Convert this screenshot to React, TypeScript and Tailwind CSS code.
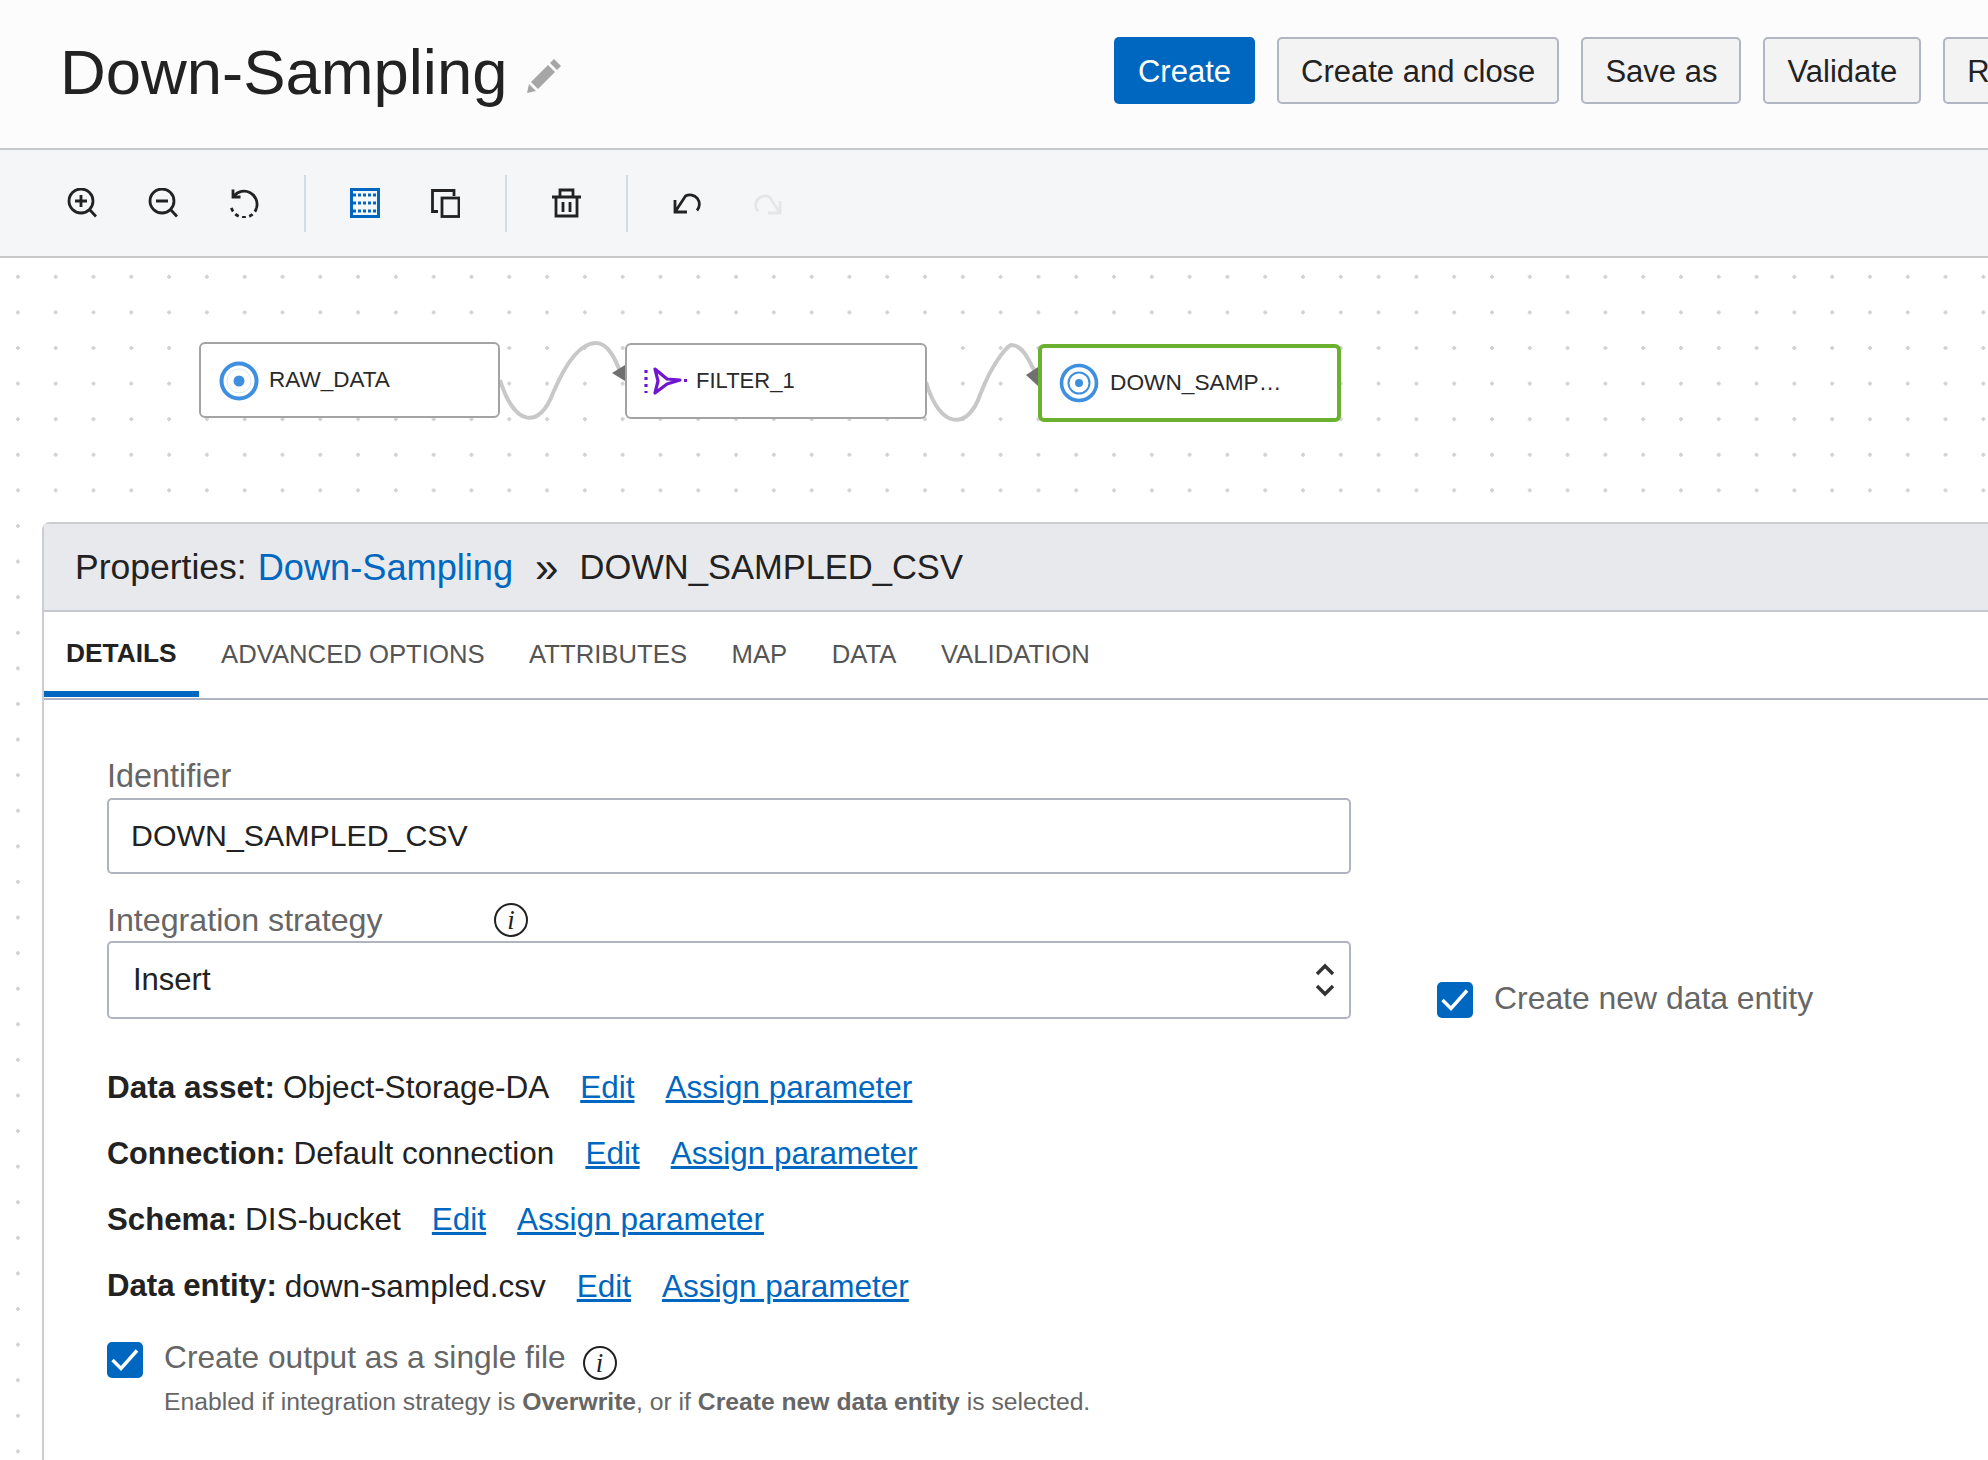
const Sep = () => <div className="mx-[-1px] h-[57px] w-[2px] bg-[#d3dce4]" />;

const ToolIcon = ({ children, className = "" }: { children: React.ReactNode; className?: string }) => (
  <svg
    viewBox="0 0 30 30"
    fill="none"
    stroke="currentColor"
    strokeWidth="2.8"
    className={`h-[30px] w-[30px] text-[#222222] ${className}`}
  >
    {children}
  </svg>
);

const Info = ({ className = "" }: { className?: string }) => (
  <span
    className={`flex h-[34px] w-[34px] shrink-0 items-center justify-center rounded-full border-2 border-[#222222] font-['Liberation_Serif',serif] text-[27px] italic leading-none text-[#222222] ${className}`}
  >
    i
  </span>
);

const Check = () => (
  <span className="flex h-[36px] w-[36px] shrink-0 items-center justify-center rounded-[5px] bg-[#0067c0]">
    <svg viewBox="0 0 36 36" fill="none" stroke="white" strokeWidth="3.4" className="h-[36px] w-[36px]">
      <path d="M5.5 18 L14 26.5 L30 8.5" />
    </svg>
  </span>
);

const HeaderButton = ({ label, className = "" }: { label: string; className?: string }) => (
  <button className={`h-[67px] shrink-0 rounded-[5px] border-2 border-[#b2b5c2] bg-[#f3f3f3] px-[22px] pt-[4px] text-left text-[31px] text-[#222222] ${className}`}>
    {label}
  </button>
);

const Node = ({ className, children, label }: { className: string; children: React.ReactNode; label: string }) => (
  <div className={`absolute flex items-center rounded-[6px] bg-white text-[#2a2a2a] ${className}`}>
    {children}
    <span className="mb-[2px]">{label}</span>
  </div>
);

const tabs = ["ADVANCED OPTIONS", "ATTRIBUTES", "MAP", "DATA", "VALIDATION"];

const rows = [
  { name: "Data asset:", value: "Object-Storage-DA", nameSize: "text-[31.5px]" },
  { name: "Connection:", value: "Default connection", nameSize: "text-[30.6px]" },
  { name: "Schema:", value: "DIS-bucket", nameSize: "text-[31.2px]" },
  { name: "Data entity:", value: "down-sampled.csv", nameSize: "text-[31.2px]" },
];

export default function App() {
  return (
    <div className="flex h-[1460px] w-[1988px] flex-col overflow-hidden bg-white font-['Liberation_Sans',sans-serif] text-[#222222]">
      {/* page header */}
      <div className="flex h-[150px] shrink-0 items-start border-b-2 border-[#c6c8ca] bg-[#fcfcfc]">
        <div className="ml-[60px] mt-[34px] flex w-[1054px] shrink-0 items-center">
          <h1 className="whitespace-nowrap text-[63.4px] leading-[76px] text-[#222222]">Down-Sampling</h1>
          <svg viewBox="0 0 36 36" fill="#a6a6a6" className="ml-[19px] mt-[8px] h-[36px] w-[36px]">
            <path d="M1 35 L3 26 L10 33 Z" />
            <path d="M5 24 L22 7 L29 14 L12 31 Z" />
            <path d="M24 5 L28 1 L35 8 L31 12 Z" />
          </svg>
        </div>
        <div className="mt-[37px] flex gap-[22px]">
          <button className="h-[67px] w-[141px] shrink-0 rounded-[5px] bg-[#0067c0] pt-[4px] text-[31px] text-white">Create</button>
          <HeaderButton label="Create and close" />
          <HeaderButton label="Save as" />
          <HeaderButton label="Validate" />
          <HeaderButton label="R" className="w-[140px]" />
        </div>
      </div>

      {/* toolbar */}
      <div className="flex h-[108px] shrink-0 items-center border-b-2 border-[#c6c8ca] bg-[#f5f6f8]">
        <div className="ml-[67px] flex items-center gap-[51px]">
          <ToolIcon>
            <circle cx="14" cy="13" r="12" />
            <path d="M22.5 21.5 L29 28.5 M8 13 H20 M14 7 V19" />
          </ToolIcon>
          <ToolIcon>
            <circle cx="14" cy="13" r="12" />
            <path d="M22.5 21.5 L29 28.5 M8 13 H20" />
          </ToolIcon>
          <ToolIcon>
            <path d="M5 8 A13 13 0 0 1 27.5 20" />
            <path d="M27.5 20 A13 13 0 0 1 2 17" strokeDasharray="4 3.4" />
            <path d="M4 1.5 V9 H11.5" />
          </ToolIcon>
        </div>
        <div className="ml-[46px]"><Sep /></div>
        <div className="ml-[45px] flex items-center gap-[50px]">
          <svg viewBox="0 0 30 30" className="h-[30px] w-[30px]">
            <rect x="0" y="0" width="30" height="30" fill="#0067c0" />
            <rect x="3" y="3" width="24" height="24" fill="#f5f6f8" />
            <path d="M3 7 H27 M3 15 H27 M3 23 H27" stroke="#0067c0" strokeWidth="3" strokeDasharray="3 2" />
          </svg>
          <ToolIcon>
            <path d="M8 23.5 H2.5 V2.5 H24 V8" />
            <rect x="12" y="10" width="17" height="18.5" />
          </ToolIcon>
        </div>
        <div className="ml-[46px]"><Sep /></div>
        <div className="ml-[46px]">
          <ToolIcon>
            <path d="M0 9 H29 M8 9 V2 H21 V9 M4 9 V28 H25 V9 M11 14 V24 M18 14 V24" />
          </ToolIcon>
        </div>
        <div className="ml-[45px]"><Sep /></div>
        <div className="ml-[46px] flex items-center gap-[49px]">
          <ToolIcon>
            <path d="M2 12 V24 H14 M2 24 L12.5 8 A9.4 9.4 0 0 1 24 22.5" />
          </ToolIcon>
          <ToolIcon className="mt-[2px] text-[#e4e6e8]">
            <path d="M28 12 V24 H16 M28 24 L17.5 8 A9.4 9.4 0 0 0 6 22.5" />
          </ToolIcon>
        </div>
      </div>

      {/* canvas */}
      <div className="relative flex-1 overflow-hidden bg-white bg-[radial-gradient(circle,#d2d2d2_1.6px,transparent_1.7px)] bg-[size:37.8px_35.6px] bg-[position:-1px_1px]">
        <svg className="absolute left-0 top-0 h-[240px] w-[1400px]" fill="none" viewBox="0 0 1400 240">
          <path d="M500 122 C515 170 540 170 553 135 C570 95 585 85 596 85 C608 85 615 100 622 118" stroke="#c8c8c8" strokeWidth="4" />
          <path d="M612 115 L625 107 L625 123 Z" fill="#707070" />
          <path d="M926 124 C940 172 968 172 980 137 C995 98 1010 87 1011 87 C1022 87 1028 100 1034 112" stroke="#c8c8c8" strokeWidth="4" />
          <path d="M1026 117 L1038 109 L1038 128 Z" fill="#707070" />
        </svg>

        <Node label="RAW_DATA" className="left-[199px] top-[84px] h-[76px] w-[301px] border-2 border-[#a3a3a3] pt-[1px] text-[22.5px]">
          <svg viewBox="0 0 40 40" className="ml-[18px] mr-[10px] h-[40px] w-[40px]">
            <circle cx="20" cy="20" r="17.5" fill="white" stroke="#3f8fe0" strokeWidth="4" />
            <circle cx="20" cy="20" r="12" fill="none" stroke="#d8e8f8" strokeWidth="1" />
            <circle cx="20" cy="20" r="5.5" fill="#3f8fe0" />
          </svg>
        </Node>
        <Node label="FILTER_1" className="left-[625px] top-[85px] h-[76px] w-[302px] border-2 border-[#a3a3a3] text-[22px]">
          <svg viewBox="0 0 46 28" fill="none" stroke="#6f16d0" strokeWidth="3.2" className="ml-[16px] mr-[7px] h-[28px] w-[46px]">
            <path d="M12 2 L24 12 L37 13 L24 17 L12 26 L15 14 Z" strokeLinejoin="round" />
            <path d="M3 3 V26 M41 13.5 H46" strokeDasharray="3 4" />
          </svg>
        </Node>
        <Node label="DOWN_SAMP…" className="left-[1038px] top-[86px] h-[78px] w-[303px] border-[4px] border-[#6bb02e] text-[22.7px]">
          <svg viewBox="0 0 40 40" className="ml-[17px] mr-[11px] h-[40px] w-[40px]">
            <circle cx="20" cy="20" r="17.5" fill="white" stroke="#3f8fe0" strokeWidth="3.6" />
            <circle cx="20" cy="20" r="10.5" fill="none" stroke="#3f8fe0" strokeWidth="2" />
            <circle cx="20" cy="20" r="4" fill="#3f8fe0" />
          </svg>
        </Node>

        {/* properties panel */}
        <div className="relative ml-[42px] mt-[264px] h-[960px] rounded-tl-[8px] border-l-2 border-t-2 border-[#cccdd0] bg-white">
          <div className="flex h-[88px] items-center whitespace-nowrap border-b-2 border-[#c5c8ce] bg-[#e8e9ec] pl-[31px] pt-[2px]">
            <span className="text-[35.5px]">Properties:</span>
            <span className="ml-[11px] text-[36.2px] text-[#0067c0]">Down-Sampling</span>
            <span className="ml-[22px] text-[42px] leading-none">»</span>
            <span className="ml-[21px] text-[34.5px]">DOWN_SAMPLED_CSV</span>
          </div>

          <div className="flex h-[88px] items-center border-b-2 border-[#b0b4c0] pb-[2px] text-[25.7px] text-[#555555]">
            <div className="relative flex h-[86px] w-[155px] items-center pl-[22px] text-[26.3px] font-bold text-[#222222]">
              DETAILS
              <div className="absolute bottom-0 left-0 h-[6px] w-[155px] bg-[#0067c0]" />
            </div>
            <div className="ml-[22px] flex gap-[44.5px]">
              {tabs.map((t) => (
                <span key={t}>{t}</span>
              ))}
            </div>
          </div>

          <div className="flex pl-[63px] pt-[56px] text-[31.5px]">
            <div className="w-[1244px] shrink-0">
              <div className="h-[40px] text-[32.4px] leading-[40px] text-[#666666]">Identifier</div>
              <div className="mt-[2px] flex h-[76px] items-center rounded-[5px] border-2 border-[#b0b4c0] pl-[22px] text-[30.3px]">DOWN_SAMPLED_CSV</div>
              <div className="mt-[26px] flex h-[40px] items-center text-[32.2px] text-[#666666]">
                <span className="w-[387px]">Integration strategy</span>
                <Info />
              </div>
              <div className="mt-[1px] flex h-[78px] items-center justify-between rounded-[5px] border-2 border-[#b0b4c0] pl-[24px] pr-[13px] text-[31px]">
                <span>Insert</span>
                <svg viewBox="0 0 22 36" fill="none" stroke="#333333" strokeWidth="3.4" className="h-[36px] w-[22px]">
                  <path d="M3 12 L11 4 L19 12 M3 24 L11 32 L19 24" />
                </svg>
              </div>

              <div className="mt-[35px]">
                {rows.map((r) => (
                  <div key={r.name} className="flex h-[66.4px] items-center">
                    <b className={r.nameSize}>{r.name}</b>
                    <span className="ml-[8px]">{r.value}</span>
                    <a className="ml-[31px] text-[#0067c0] underline">Edit</a>
                    <a className="ml-[31px] text-[#0067c0] underline">Assign parameter</a>
                  </div>
                ))}
              </div>

              <div className="mt-[22px] flex items-start">
                <Check />
                <div className="ml-[21px]">
                  <div className="flex h-[36px] items-center text-[#666666]">
                    <span className="mb-[3px] text-[31.7px]">Create output as a single file</span>
                    <Info className="ml-[17px] mt-[7px]" />
                  </div>
                  <div className="mt-[5px] text-[24.7px] text-[#666666]">
                    Enabled if integration strategy is <b>Overwrite</b>, or if <b>Create new data entity</b> is selected.
                  </div>
                </div>
              </div>
            </div>

            <div className="ml-[86px] flex h-[36px] items-center">
              <div className="mt-[452px] flex items-center">
                <Check />
                <span className="mb-[2px] ml-[21px] whitespace-nowrap text-[31.9px] text-[#666666]">Create new data entity</span>
              </div>
            </div>
          </div>
        </div>
      </div>
    </div>
  );
}
